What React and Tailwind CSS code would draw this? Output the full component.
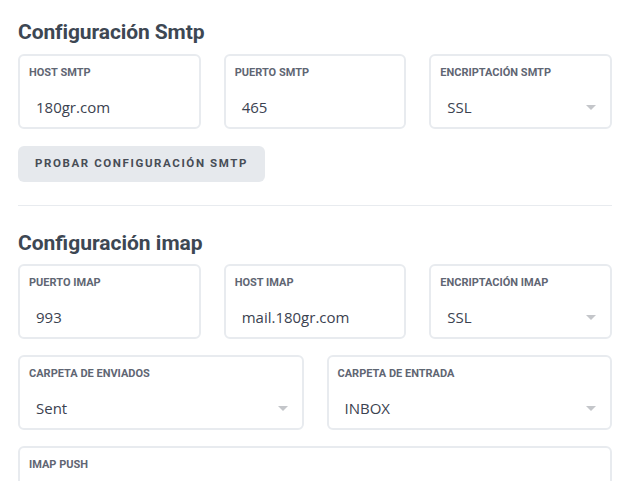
function Field({ label, value, select, className = "" }) {
    return (
        <div
            className={`h-[75px] rounded-[6px] border-2 border-[#e8ebef] bg-white px-[9px] pt-[10px] ${className}`}
        >
            <div className="font-['Roboto'] text-[11px] font-bold leading-[14px] tracking-[0px] text-[#5f6673]">
                {label}
            </div>
            <div className="mt-[17px] flex items-center justify-between pl-[7px] pr-[5px]">
                <span className="font-['Open_Sans'] text-[15px] leading-[20px] text-[#3b4250]">{value}</span>
                {select && (
                    <span className="h-0 w-0 border-x-[5px] border-t-[5px] border-x-transparent border-t-[#c4c6ca]" />
                )}
            </div>
        </div>
    );
}

export default function App() {
    return (
        <div className="h-[481px] w-[635px] overflow-hidden bg-white px-[18px] pt-[19px]">
            {/* Smtp */}
            <h2 className="font-['Roboto'] text-[21px] font-bold leading-[26px] tracking-[-0.1px] text-[#3d4753]">
                Configuración Smtp
            </h2>

            <div className="mt-[9px] grid w-[594px] grid-cols-3 gap-[23px]">
                <Field label="HOST SMTP" value="180gr.com" />
                <Field label="PUERTO SMTP" value="465" />
                <Field label="ENCRIPTACIÓN SMTP" value="SSL" select />
            </div>

            <button className="mt-[17px] h-[36px] w-[247px] rounded-[6px] bg-[#e6e9ed] font-['Roboto'] text-[11.5px] font-bold tracking-[1.6px] text-[#474d56]">
                PROBAR CONFIGURACIÓN SMTP
            </button>

            <div className="mt-[23px] w-[594px] border-t border-[#e8ebef]" />

            {/* Imap */}
            <h2 className="mt-[24px] font-['Roboto'] text-[21px] font-bold leading-[26px] tracking-[0px] text-[#3d4753]">
                Configuración imap
            </h2>

            <div className="mt-[8px] grid w-[594px] grid-cols-3 gap-[23px]">
                <Field label="PUERTO IMAP" value="993" />
                <Field label="HOST IMAP" value="mail.180gr.com" />
                <Field label="ENCRIPTACIÓN IMAP" value="SSL" select />
            </div>

            <div className="mt-[16px] grid w-[594px] grid-cols-2 gap-[23px]">
                <Field label="CARPETA DE ENVIADOS" value="Sent" select />
                <Field label="CARPETA DE ENTRADA" value="INBOX" select />
            </div>

            <div className="mt-[16px] w-[594px]">
                <Field label="IMAP PUSH" value="" />
            </div>
        </div>
    );
}
